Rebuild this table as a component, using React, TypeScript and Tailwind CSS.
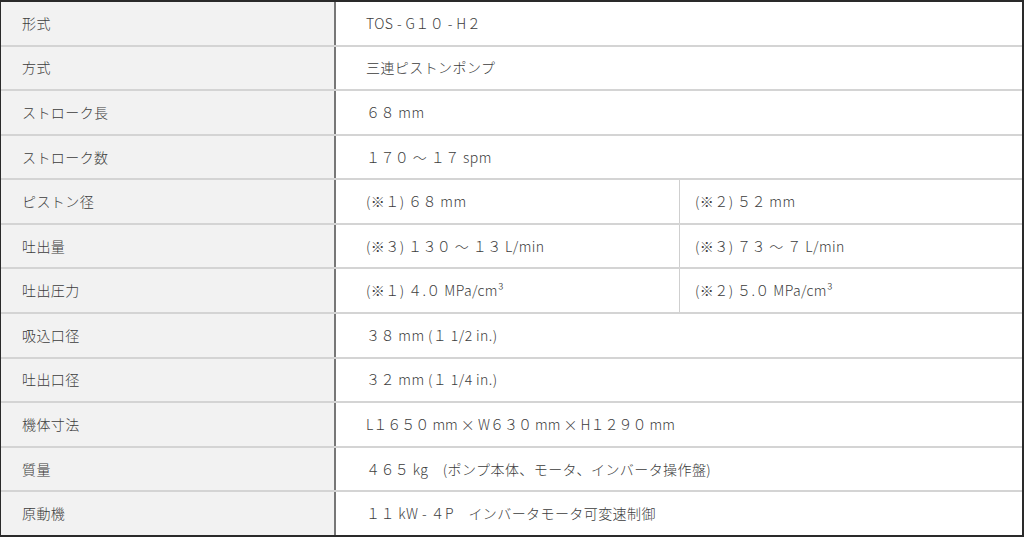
import React from "react";

type Row = { label: string; values: string[]; tight?: boolean };

const rows: Row[] = [
  { label: "形式", values: ["TOS - G１０ - H２"] },
  { label: "方式", values: ["三連ピストンポンプ"] },
  { label: "ストローク長", values: ["６８ mm"] },
  { label: "ストローク数", values: ["１７０ ～ １７ spm"] },
  { label: "ピストン径", values: ["(※１) ６８ mm", "(※２) ５２ mm"] },
  { label: "吐出量", values: ["(※３) １３０ ～ １３ L/min", "(※３) ７３ ～ ７ L/min"] },
  { label: "吐出圧力", values: ["(※１) ４.０ MPa/cm³", "(※２) ５.０ MPa/cm³"] },
  { label: "吸込口径", values: ["３８ mm (１ 1/2 in.)"] },
  { label: "吐出口径", values: ["３２ mm (１ 1/4 in.)"] },
  { label: "機体寸法", values: ["L１６５０ mm × W６３０ mm × H１２９０ mm"], tight: true },
  { label: "質量", values: ["４６５ kg　(ポンプ本体、モータ、インバータ操作盤)"] },
  { label: "原動機", values: ["１１ kW - ４P　インバータモータ可変速制御"] },
];

export default function App() {
  return (
    <div
      className="w-[1024px] h-[537px] bg-white border-l border-t-2 border-r-2 border-b-2 border-[#2a2a2a] flex flex-col text-[14px] font-light tracking-[0.03em] text-[#3c3c3c]"
      style={{ fontFamily: '"Noto Sans CJK JP", "Noto Sans", sans-serif' }}
    >
      {rows.map((r, i) => (
        <div
          key={i}
          className={
            "flex flex-1 min-h-0 " +
            (i < rows.length - 1 ? "border-b-2 border-[#d4d4d4]" : "")
          }
        >
          <div className="w-[335px] shrink-0 bg-[#f2f2f2] flex items-center pl-[21px] border-r-2 border-[#777]">
            {r.label}
          </div>
          {r.values.length === 1 ? (
            <div
              className={
                "flex-1 flex items-center pl-[30px] " +
                (r.tight ? "tracking-normal" : "")
              }
            >
              {r.values[0]}
            </div>
          ) : (
            <div className="flex-1 flex">
              <div className="w-[344px] shrink-0 flex items-center pl-[30px] border-r border-[#cfcfcf]">
                {r.values[0]}
              </div>
              <div className="flex-1 flex items-center pl-[15px]">
                {r.values[1]}
              </div>
            </div>
          )}
        </div>
      ))}
    </div>
  );
}
